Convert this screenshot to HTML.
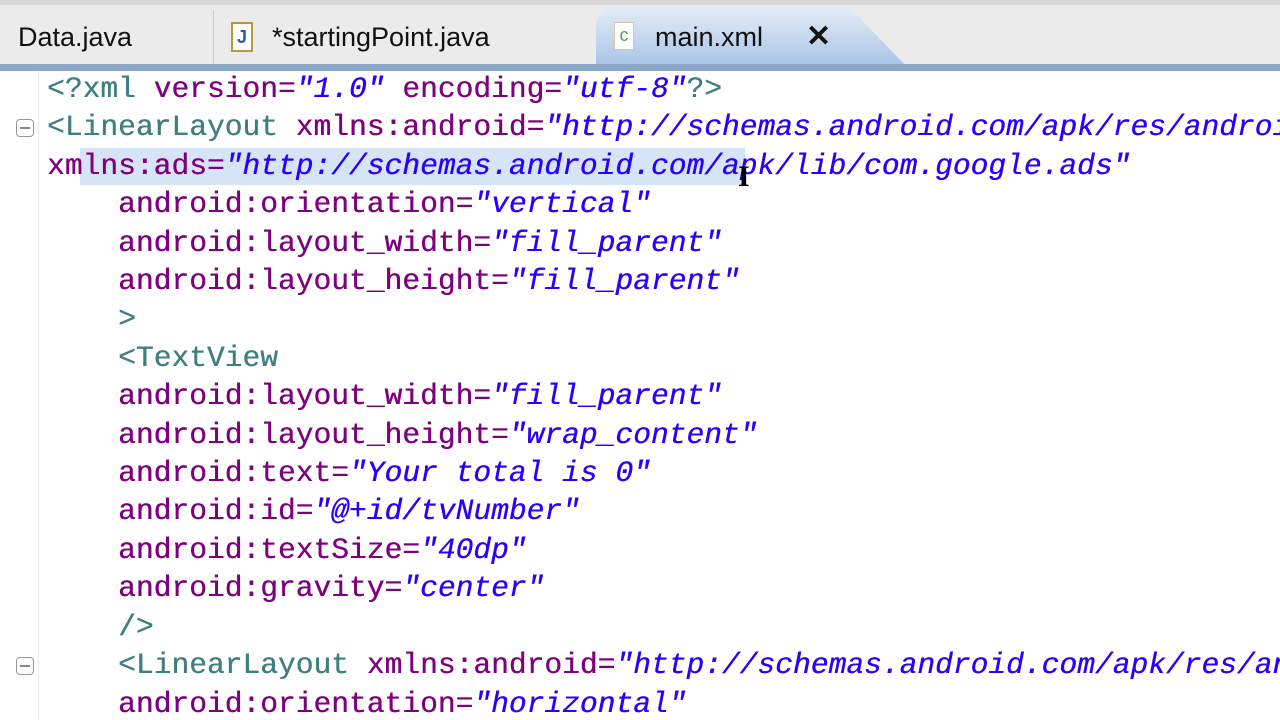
<!DOCTYPE html>
<html><head><meta charset="utf-8"><style>
html,body{margin:0;width:1280px;height:720px;overflow:hidden;background:#fff;position:relative;font-family:"Liberation Mono",monospace}
.tabbar{position:absolute;left:0;top:0;width:1280px;height:64px;background:#ebebeb;border-top:5px solid #d8d8d8;box-sizing:border-box}
.tab{position:absolute;top:10px;height:54px;font:27px "Liberation Sans",sans-serif;color:#111;line-height:54px}
.sep{position:absolute;top:10px;width:1px;height:54px;background:#c9c9c9}
.active{position:absolute;left:596px;top:8px;width:310px;height:58px;background:linear-gradient(#e4ecf7,#a8c3e6);border-radius:18px 0 0 0;clip-path:polygon(0 0,82% 0,100% 100%,0 100%)}
.bar{position:absolute;left:0;top:64px;width:1280px;height:7px;background:#8fa8c9}
.gut{position:absolute;left:38px;top:71px;width:1px;height:649px;background:#eee}
.code{position:absolute;left:47px;top:70px;width:1233px;height:650px;overflow:hidden;font-size:29.6px;line-height:38.4px;white-space:pre;color:#7f007f;text-shadow:0.4px 0 0 currentColor}
.t{color:#3f7f7f}.s{color:#2a00ff;font-style:italic}.p{color:#7f007f}
.sel{position:absolute;left:80px;top:148px;width:665px;height:37px;background:#d5e4f6}
.fold{position:absolute;left:16px;width:18px;height:18px;border:1.5px solid #999;border-radius:4px;box-sizing:border-box}
.fold:after{content:"";position:absolute;left:3px;right:3px;top:7px;height:1.5px;background:#888}
</style></head><body>
<div class="tabbar"></div>
<div class="active"></div>
<div class="tab" style="left:18px">Data.java</div>
<div class="sep" style="left:213px"></div>
<div style="position:absolute;left:231px;top:22px;width:22px;height:30px;border:2px solid #b59a3a;background:#fff;box-sizing:border-box;font:bold 18px 'Liberation Sans';color:#2a5aa8;text-align:center;line-height:26px">J</div>
<div class="tab" style="left:272px">*startingPoint.java</div>
<div style="position:absolute;left:614px;top:22px;width:20px;height:28px;background:#fff;border:1px solid #cca;box-sizing:border-box;color:#4a4;font:18px 'Liberation Sans';line-height:24px;text-align:center">c</div>
<div class="tab" style="left:655px">main.xml</div>
<div class="tab" style="left:806px;font-weight:bold;font-size:30px">✕</div>
<div class="bar"></div>
<div class="gut"></div>
<div class="sel"></div>
<div class="fold" style="top:119px"></div>
<div class="fold" style="top:657px"></div>
<div class="code"><span class="t">&lt;?xml </span>version=<span class="s">"1.0"</span> encoding=<span class="s">"utf-8"</span><span class="t">?&gt;</span>
<span class="t">&lt;LinearLayout </span>xmlns:android=<span class="s">"http://schemas.android.com/apk/res/android"</span>
xmlns:ads=<span class="s">"http://schemas.android.com/apk/lib/com.google.ads"</span>
    android:orientation=<span class="s">"vertical"</span>
    android:layout_width=<span class="s">"fill_parent"</span>
    android:layout_height=<span class="s">"fill_parent"</span>
    <span class="t">&gt;</span>
    <span class="t">&lt;TextView</span>
    android:layout_width=<span class="s">"fill_parent"</span>
    android:layout_height=<span class="s">"wrap_content"</span>
    android:text=<span class="s">"Your total is 0"</span>
    android:id=<span class="s">"@+id/tvNumber"</span>
    android:textSize=<span class="s">"40dp"</span>
    android:gravity=<span class="s">"center"</span>
    <span class="t">/&gt;</span>
    <span class="t">&lt;LinearLayout </span>xmlns:android=<span class="s">"http://schemas.android.com/apk/res/android"</span>
    android:orientation=<span class="s">"horizontal"</span></div>
<div style="position:absolute;left:738px;top:160px;font:bold 30px 'Liberation Serif';color:#000">I</div>
</body></html>
